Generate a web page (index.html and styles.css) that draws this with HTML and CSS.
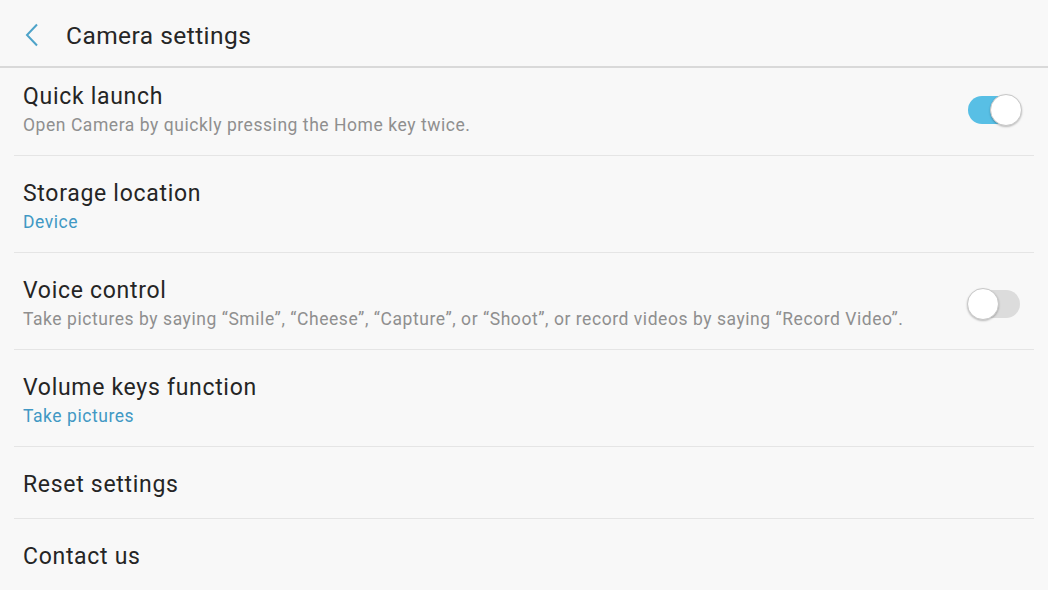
FILE: index.html
```html
<!DOCTYPE html>
<html lang="en">
<head>
<meta charset="utf-8">
<title>Camera settings</title>
<link rel="stylesheet" href="styles.css">
</head>
<body>
<header class="appbar">
  <button class="back" aria-label="Back">
    <svg width="16" height="24" viewBox="0 0 16 24"><path d="M13 1.5 L3 12 L13 22.5" fill="none" stroke="#4ea3c9" stroke-width="2"/></svg>
  </button>
  <h1 class="title">Camera settings</h1>
</header>
<main class="list">
  <div class="row first">
    <div class="text">
      <div class="name">Quick launch</div>
      <div class="sub">Open Camera by quickly pressing the Home key twice.</div>
    </div>
    <div class="switch on"><span class="thumb"></span></div>
  </div>
  <div class="row">
    <div class="text">
      <div class="name">Storage location</div>
      <div class="sub value">Device</div>
    </div>
  </div>
  <div class="row">
    <div class="text">
      <div class="name">Voice control</div>
      <div class="sub">Take pictures by saying “Smile”, “Cheese”, “Capture”, or “Shoot”, or record videos by saying “Record Video”.</div>
    </div>
    <div class="switch"><span class="thumb"></span></div>
  </div>
  <div class="row">
    <div class="text">
      <div class="name">Volume keys function</div>
      <div class="sub value">Take pictures</div>
    </div>
  </div>
  <div class="row single">
    <div class="text"><div class="name">Reset settings</div></div>
  </div>
  <div class="row single last">
    <div class="text"><div class="name">Contact us</div></div>
  </div>
</main>
</body>
</html>
```
FILE: styles.css
```css
* { box-sizing: border-box; }
html, body { margin: 0; padding: 0; }
body {
  background: #f8f8f8;
  font-family: Roboto, "Noto Sans", sans-serif;
  color: #252525;
  width: 1048px;
  height: 590px;
  overflow: hidden;
}
.appbar {
  height: 68px;
  display: flex;
  align-items: center;
  padding-top: 4px;
  border-bottom: 2px solid #d9d9d9;
}
.back {
  border: 0;
  background: none;
  padding: 0;
  margin-left: 24px;
  width: 16px;
  height: 24px;
  display: flex;
}
.title {
  margin: 0 0 0 26px;
  font-size: 24.5px;
  letter-spacing: 0.45px;
  font-weight: 400;
  color: #262626;
}
.list {
  padding: 0 14px;
}
.row {
  display: flex;
  align-items: center;
  padding: 23px 14px 17px 9px;
  border-bottom: 1px solid #e5e5e5;
}
.row.first { padding-top: 14px; }
.row.single { padding-bottom: 19px; }
.row.last { border-bottom: 0; }
.text { flex: 1; }
.name {
  font-size: 23px;
  letter-spacing: 0.7px;
  line-height: 29px;
  color: #252525;
}
.sub {
  padding-top: 1px;
  font-size: 17.5px;
  letter-spacing: 0.55px;
  line-height: 26px;
  color: #8f8f8f;
}
.sub.value { color: #4198c4; }
.switch {
  position: relative;
  width: 52px;
  height: 28px;
  border-radius: 14px;
  background: #dcdcdc;
  flex: none;
}
.switch.on { background: #58bfe5; }
.thumb {
  position: absolute;
  top: -2px;
  left: -1px;
  width: 32px;
  height: 32px;
  border-radius: 50%;
  background: #ffffff;
  border: 1px solid #c8c8c8;
  box-shadow: 0 1px 2px rgba(0,0,0,0.25);
}
.switch.on .thumb { left: auto; right: -2px; }
```
